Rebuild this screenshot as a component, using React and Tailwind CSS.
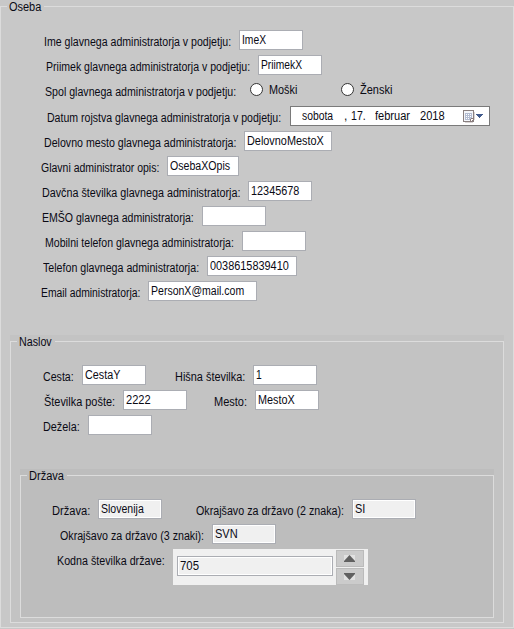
import { useLayoutEffect, useRef, useState } from "react";

// Condenses a line of text horizontally so that it fills the given width.
function Fit({ w, children }) {
  const ref = useRef(null);
  const [scale, setScale] = useState(1);
  useLayoutEffect(() => {
    if (ref.current) setScale(w / ref.current.offsetWidth);
  }, [w, children]);
  return (
    <span className="block h-4 shrink-0 leading-4" style={{ width: w }}>
      <span
        ref={ref}
        className="inline-block origin-left whitespace-pre leading-4"
        style={{ transform: `scaleX(${scale})` }}
      >
        {children}
      </span>
    </span>
  );
}

function Label({ w, className = "", children }) {
  return (
    <label className={`block shrink-0 pl-px pt-1 ${className}`}>
      <Fit w={w - 1}>{children}</Fit>
    </label>
  );
}

function Field({ w, readOnly = false, className = "", children }) {
  return (
    <div
      className={`h-5 shrink-0 border border-[#abadb3] pl-[2px] pt-px ${
        readOnly ? "bg-[#f0f0f0] shadow-[inset_0_0_0_1px_#fff]" : "bg-white"
      } ${className}`}
    >
      {children && <Fit w={w}>{children}</Fit>}
    </div>
  );
}

function Row({ className = "h-[25px]", children }) {
  return <div className={`flex items-start ${className}`}>{children}</div>;
}

function Radio({ w, className = "", children }) {
  return (
    <div className={`flex shrink-0 items-start pt-[2px] ${className}`}>
      <span className="mt-px size-[13px] rounded-full border border-[#333] bg-white" />
      <span className="ml-[6px]">
        <Fit w={w}>{children}</Fit>
      </span>
    </div>
  );
}

// Group box frame: the top line is broken around the caption.
function Group({ title, w, className = "", children }) {
  return (
    <section className={`flex flex-col ${className}`}>
      <div className="flex h-[6px] items-start">
        <div className="mt-[6px] h-px w-[7px] shrink-0 bg-[#dcdcdc]" />
        <div className="-mt-px ml-[2px] mr-[3px] h-4">
          <Fit w={w}>{title}</Fit>
        </div>
        <div className="mt-[6px] h-px flex-1 bg-[#dcdcdc]" />
      </div>
      <div className="flex-1 border-x border-b border-[#dcdcdc]">{children}</div>
    </section>
  );
}

function SpinButton({ down = false, className = "" }) {
  return (
    <div
      className={`flex h-[17px] w-7 justify-center border border-[#bbbbbb] bg-[#cbcbcb] pr-px pt-1 ${className}`}
    >
      <svg width="11" height="7" viewBox="0 0 11 7" className="bg-[#e1e1e1]">
        <path d={down ? "M0 0H11V1L5.5 7L0 1Z" : "M5.5 0L11 6V7H0V6Z"} fill="#606060" />
      </svg>
    </div>
  );
}

function CalendarIcon() {
  return (
    <svg width="22" height="14" viewBox="0 0 22 14" className="shrink-0" shapeRendering="crispEdges">
      <path d="M2 12.5H9.5M11.5 2V10" fill="none" stroke="#d8d4d4" />
      <rect x="0.5" y="0.5" width="10" height="11" fill="#f4f6fa" stroke="#8a8080" />
      <rect x="2" y="3" width="7" height="7" fill="#b4bdd2" />
      <path d="M3 4h1v1h-1zM5 4h1v1h-1zM7 4h1v1h-1zM3 6h1v1h-1zM5 6h1v1h-1zM7 6h1v1h-1zM3 8h1v1h-1zM5 8h1v1h-1z" fill="#fff" />
      <path d="M7 12V9H8V8H11V10H10V11H9V12Z" fill="#8a7c7c" />
      <path d="M8 9H10V10H9V11H8Z" fill="#fff" />
      <path d="M13 4H20V5H19V6H18V7H17V8H16V7H15V6H14V5H13Z" fill="#415a8c" />
    </svg>
  );
}

function DateField() {
  return (
    <div className="ml-[9px] flex h-5 w-[200px] shrink-0 items-start border border-[#7a7a7a] bg-white pl-[11px] pt-px">
      <Fit w={31}>sobota</Fit>
      <span className="ml-[11px]"><Fit w={3}>,</Fit></span>
      <span className="ml-[4px]"><Fit w={15}>17.</Fit></span>
      <span className="ml-[9px]"><Fit w={35}>februar</Fit></span>
      <span className="ml-[10px]"><Fit w={25}>2018</Fit></span>
      <span className="ml-[18px] mt-[2px]"><CalendarIcon /></span>
    </div>
  );
}

export default function App() {
  return (
    <main className="h-[629px] w-[514px] overflow-hidden bg-[#c8c8c8] font-['Liberation_Sans',Arial,sans-serif] text-[12px] text-[#0a0a14]">
      <Group title="Oseba" w={32} className="h-[628px]">
        <div className="pt-6">
          <Row>
            <Label w={188} className="ml-[42px]">Ime glavnega administratorja v podjetju:</Label>
            <Field w={24} className="ml-2 w-16">ImeX</Field>
          </Row>
          <Row>
            <Label w={205} className="ml-[44px]">Priimek glavnega administratorja v podjetju:</Label>
            <Field w={41} className="ml-2 w-16">PriimekX</Field>
          </Row>
          <Row className="h-[26px]">
            <Label w={192} className="ml-[43px]">Spol glavnega administratorja v podjetju:</Label>
            <Radio w={28} className="ml-[14px]">Moški</Radio>
            <Radio w={32} className="ml-[44px]">Ženski</Radio>
          </Row>
          <Row>
            <Label w={235} className="ml-[45px]">Datum rojstva glavnega administratorja v podjetju:</Label>
            <DateField />
          </Row>
          <Row>
            <Label w={193} className="ml-[42px]">Delovno mesto glavnega administratorja:</Label>
            <Field w={77} className="ml-2 w-[88px]">DelovnoMestoX</Field>
          </Row>
          <Row>
            <Label w={119} className="ml-[39px]">Glavni administrator opis:</Label>
            <Field w={60} className="ml-2 w-[72px]">OsebaXOpis</Field>
          </Row>
          <Row>
            <Label w={199} className="ml-[40px]">Davčna številka glavnega administratorja:</Label>
            <Field w={48} className="ml-2 w-16">12345678</Field>
          </Row>
          <Row>
            <Label w={153} className="ml-[40px]">EMŠO glavnega administratorja:</Label>
            <Field className="ml-2 w-16" />
          </Row>
          <Row>
            <Label w={190} className="ml-[43px]">Mobilni telefon glavnega administratorja:</Label>
            <Field className="ml-2 w-16" />
          </Row>
          <Row>
            <Label w={157} className="ml-[41px]">Telefon glavnega administratorja:</Label>
            <Field w={79} className="ml-2 w-[90px]">0038615839410</Field>
          </Row>
          <Row>
            <Label w={100} className="ml-[39px]">Email administratorja:</Label>
            <Field w={93} className="ml-2 w-[109px]">PersonX@mail.com</Field>
          </Row>
        </div>

        <Group title="Naslov" w={33} className="ml-[9px] mr-[9px] mt-[29px] h-[288px] bg-[#c3c3c3]">
          <div className="pt-6">
            <Row>
              <Label w={32} className="ml-[31px]">Cesta:</Label>
              <Field w={35} className="ml-2 w-16">CestaY</Field>
              <Label w={71} className="ml-[28px]">Hišna številka:</Label>
              <Field w={6} className="ml-2 w-16">1</Field>
            </Row>
            <Row>
              <Label w={72} className="ml-[32px]">Številka pošte:</Label>
              <Field w={25} className="ml-2 w-16">2222</Field>
              <Label w={34} className="ml-[26px]">Mesto:</Label>
              <Field w={37} className="ml-2 w-16">MestoX</Field>
            </Row>
            <Row>
              <Label w={38} className="ml-[31px]">Dežela:</Label>
              <Field className="ml-2 w-16" />
            </Row>
          </div>

          <Group title="Država" w={35} className="ml-[9px] mr-[9px] mt-[29px] h-[149px] bg-[#bdbdbd]">
            <div className="pt-6">
              <Row>
                <Label w={39} className="ml-[30px]">Država:</Label>
                <Field readOnly w={43} className="ml-2 w-16">Slovenija</Field>
                <Label w={149} className="ml-[33px]">Okrajšavo za državo (2 znaka):</Label>
                <Field readOnly w={10} className="ml-2 w-16">SI</Field>
              </Row>
              <Row>
                <Label w={145} className="ml-[38px]">Okrajšavo za državo (3 znaki):</Label>
                <Field readOnly w={23} className="ml-2 w-16">SVN</Field>
              </Row>
              <Row>
                <Label w={109} className="ml-[35px]">Kodna številka države:</Label>
                <div className="ml-2 flex h-9 w-[195px] shrink-0 items-start bg-[#f0f0f0] pl-1">
                  <Field readOnly w={19} className="mt-[7px] w-[156px]">705</Field>
                  <div className="ml-[3px] mt-px">
                    <SpinButton />
                    <SpinButton down className="mt-px" />
                  </div>
                </div>
              </Row>
            </div>
          </Group>
        </Group>
      </Group>
    </main>
  );
}
